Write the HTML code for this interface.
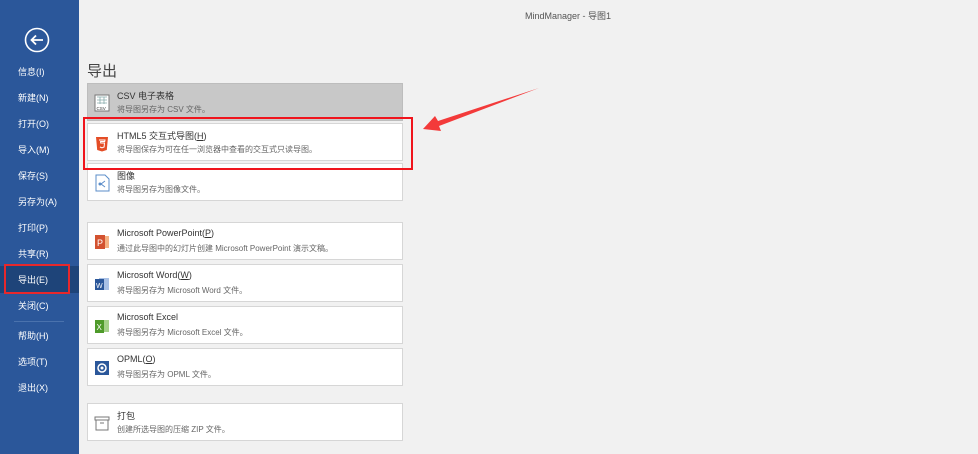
<!DOCTYPE html>
<html><head><meta charset="utf-8"><style>
*{margin:0;padding:0;box-sizing:border-box}
body{width:978px;height:454px;overflow:hidden;background:#f1f1f1;font-family:"Liberation Sans","Noto Sans CJK SC",sans-serif;position:relative}
#side{position:absolute;left:0;top:0;width:79px;height:454px;background:#2b579a}
.mi{position:absolute;left:18px;color:#fff;font-size:9px}
.card{position:absolute;left:87px;width:316px;height:38px;background:#fff;border:1px solid #d6d6d6}
.card .t{position:absolute;left:29px;top:5px;font-size:9px;color:#333}
.card .d{position:absolute;left:29px;top:20px;font-size:8px;color:#666}
.ic{position:absolute;left:6px;top:10px;width:16px;height:18px}
</style></head><body>
<div id="side">
<svg style="position:absolute;left:24px;top:27px" width="26" height="26" viewBox="0 0 26 26"><circle cx="13" cy="13" r="11.5" fill="none" stroke="#fff" stroke-width="1.6"/><path d="M19 13H8M12 8.5L7.5 13L12 17.5" fill="none" stroke="#fff" stroke-width="1.8"/></svg>
<div class="mi" style="top:65px">信息(I)</div>
<div class="mi" style="top:91px">新建(N)</div>
<div class="mi" style="top:117px">打开(O)</div>
<div class="mi" style="top:143px">导入(M)</div>
<div class="mi" style="top:169px">保存(S)</div>
<div class="mi" style="top:195px">另存为(A)</div>
<div class="mi" style="top:221px">打印(P)</div>
<div class="mi" style="top:247px">共享(R)</div>
<div style="position:absolute;left:0;top:266px;width:79px;height:27px;background:#1e4479"></div>
<div style="position:absolute;left:4px;top:264px;width:66px;height:30px;border:2px solid #e8282b"></div>
<div class="mi" style="top:273px">导出(E)</div>
<div class="mi" style="top:299px">关闭(C)</div>
<div style="position:absolute;left:14px;top:321px;width:50px;height:1px;background:#4a72ad"></div>
<div class="mi" style="top:329px">帮助(H)</div>
<div class="mi" style="top:355px">选项(T)</div>
<div class="mi" style="top:381px">退出(X)</div>
</div>
<div style="position:absolute;left:525px;top:9px;font-size:9px;color:#555">MindManager - 导图1</div>
<div style="position:absolute;left:87px;top:60px;font-size:15px;color:#444">导出</div>

<div class="card" style="top:83px;background:#c8c8c8;border-color:#bdbdbd"><svg class="ic" viewBox="0 0 16 18"><rect x="1" y="1" width="14" height="16" fill="#fff" stroke="#777"/><path d="M3 3h10M3 6h10M3 9h10M6 3v7M10 3v7" stroke="#8aa" stroke-width=".8"/><text x="2.5" y="16" font-size="4.5" fill="#333" font-family="Liberation Sans">CSV</text></svg><div class="t">CSV 电子表格</div><div class="d">将导图另存为 CSV 文件。</div></div>
<div class="card" style="top:123px"><svg class="ic" viewBox="0 0 16 18"><path d="M2 3h12l-1.2 13L8 17.5 3.2 16z" fill="#e44d26"/><path d="M5 6h6l-.3 1.5H6.6l.1 1.5h3.8l-.4 4L8 13.8 5.9 13" fill="none" stroke="#fff" stroke-width="1"/></svg><div class="t">HTML5 交互式导图(<u>H</u>)</div><div class="d">将导图保存为可在任一浏览器中查看的交互式只读导图。</div></div>
<div class="card" style="top:163px"><svg class="ic" viewBox="0 0 16 18"><path d="M2 1h9l4 4v12H2z" fill="#fff" stroke="#5b8dc9"/><circle cx="6" cy="10" r="1.5" fill="#5b8dc9"/><path d="M7 10l4-3M7 10l4 3" stroke="#5b8dc9"/></svg><div class="t">图像</div><div class="d">将导图另存为图像文件。</div></div>

<div class="card" style="top:222px"><svg class="ic" viewBox="0 0 16 18"><rect x="5" y="3" width="10" height="12" fill="#f4b183"/><rect x="1" y="2" width="10" height="14" fill="#d35230"/><text x="3" y="13" font-size="9" fill="#fff" font-family="Liberation Sans">P</text></svg><div class="t">Microsoft PowerPoint(<u>P</u>)</div><div class="d">通过此导图中的幻灯片创建 Microsoft PowerPoint 演示文稿。</div></div>
<div class="card" style="top:264px"><svg class="ic" viewBox="0 0 16 18"><rect x="5" y="3" width="10" height="12" fill="#a9c1e6"/><rect x="1" y="4" width="9" height="11" fill="#2b579a"/><text x="2" y="13" font-size="7" fill="#fff" font-family="Liberation Sans">W</text></svg><div class="t">Microsoft Word(<u>W</u>)</div><div class="d">将导图另存为 Microsoft Word 文件。</div></div>
<div class="card" style="top:306px"><svg class="ic" viewBox="0 0 16 18"><rect x="6" y="3" width="9" height="12" fill="#a5d18a"/><rect x="1" y="3" width="9" height="13" fill="#4e9a2a"/><text x="2.5" y="13" font-size="8" fill="#fff" font-family="Liberation Sans">X</text></svg><div class="t">Microsoft Excel</div><div class="d">将导图另存为 Microsoft Excel 文件。</div></div>
<div class="card" style="top:348px"><svg class="ic" viewBox="0 0 16 18"><rect x="1" y="2" width="14" height="14" fill="#2b579a"/><circle cx="8" cy="9" r="4" fill="none" stroke="#fff" stroke-width="1.5"/><circle cx="8" cy="9" r="1.5" fill="#fff"/></svg><div class="t">OPML(<u>O</u>)</div><div class="d">将导图另存为 OPML 文件。</div></div>

<div class="card" style="top:403px"><svg class="ic" viewBox="0 0 16 18"><path d="M1 3h14v3H1zM2 6v10h12V6" fill="none" stroke="#777"/><path d="M6 9h4" stroke="#777"/></svg><div class="t">打包</div><div class="d">创建所选导图的压缩 ZIP 文件。</div></div>

<div style="position:absolute;left:83px;top:117px;width:330px;height:53px;border:2.5px solid #f0141c"></div>
<svg style="position:absolute;left:0;top:0" width="978" height="454"><polygon points="539,88 438,121 435,116 423,129 441,131 439,126" fill="#f33a3a"/></svg>
</body></html>
